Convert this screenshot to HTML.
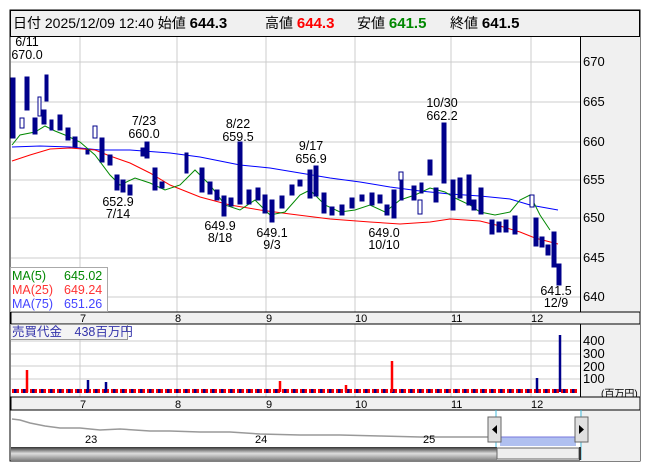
<!DOCTYPE html>
<html><head><meta charset="utf-8"><style>
body{margin:0;background:#fff;width:653px;height:470px;overflow:hidden;font-family:"Liberation Sans","Noto Sans CJK JP",sans-serif}
svg text{font-family:"Liberation Sans","Noto Sans CJK JP",sans-serif}
</style></head><body>
<svg width="653" height="470" xmlns="http://www.w3.org/2000/svg">
<rect x="10" y="10" width="630" height="451" fill="#fff" stroke="#000"/>
<rect x="10.5" y="10.5" width="629" height="26" fill="#f0f0f0" stroke="#000"/>
<text x="13" y="28" font-size="14" fill="#000">日付 2025/12/09 12:40 始値 <tspan font-weight="bold" font-size="15">644.3</tspan></text>
<text x="265" y="28" font-size="14">高値 <tspan font-weight="bold" font-size="15" fill="#f00">644.3</tspan></text>
<text x="357" y="28" font-size="14">安値 <tspan font-weight="bold" font-size="15" fill="#080">641.5</tspan></text>
<text x="450" y="28" font-size="14">終値 <tspan font-weight="bold" font-size="15">641.5</tspan></text>
<rect x="580" y="37" width="60" height="424" fill="#f0f0f0"/>
<line x1="580.5" y1="37" x2="580.5" y2="410" stroke="#000"/>
<g stroke="#ccc">
<line x1="11" x2="580" y1="62" y2="62"/><line x1="11" x2="580" y1="102" y2="102"/><line x1="11" x2="580" y1="142" y2="142"/><line x1="11" x2="580" y1="180" y2="180"/><line x1="11" x2="580" y1="218" y2="218"/><line x1="11" x2="580" y1="258" y2="258"/><line x1="11" x2="580" y1="297" y2="297"/>
<line x1="80" x2="80" y1="37" y2="397"/><line x1="177" x2="177" y1="37" y2="397"/><line x1="266" x2="266" y1="37" y2="397"/><line x1="355" x2="355" y1="37" y2="397"/><line x1="451" x2="451" y1="37" y2="397"/><line x1="531" x2="531" y1="37" y2="397"/>
<line x1="11" x2="580" y1="341" y2="341"/><line x1="11" x2="580" y1="354" y2="354"/><line x1="11" x2="580" y1="366" y2="366"/><line x1="11" x2="580" y1="379" y2="379"/>
</g>
<g font-size="13" fill="#000">
<text x="583" y="66">670</text><text x="583" y="106">665</text><text x="583" y="146">660</text><text x="583" y="184">655</text><text x="583" y="222">650</text><text x="583" y="262">645</text><text x="583" y="301">640</text>
<text x="583" y="345">400</text><text x="583" y="358">300</text><text x="583" y="371">200</text><text x="583" y="383">100</text>
<text x="601" y="397" font-size="10">(百万円)</text>
</g>
<rect x="11" y="312" width="629" height="12" fill="#f0f0f0" stroke="#000"/>
<rect x="11" y="397" width="629" height="13" fill="#f0f0f0" stroke="#000"/>
<g font-size="11"><text x="80" y="322">7</text><text x="175" y="322">8</text><text x="266" y="322">9</text><text x="355" y="322">10</text><text x="451" y="322">11</text><text x="531" y="322">12</text>
<text x="80" y="408">7</text><text x="175" y="408">8</text><text x="266" y="408">9</text><text x="355" y="408">10</text><text x="451" y="408">11</text><text x="531" y="408">12</text></g>
<polyline fill="none" stroke="#00f" points="12,147 40,146 70,147 100,150 130,150 170,153 200,157 240,165 270,168 300,173 330,178 360,182 390,187 420,191 450,194 480,196 510,199 530,205 558,210"/>
<polyline fill="none" stroke="#f00" points="12,161 30,155 50,149 70,148 95,150 110,156 130,163 150,173 170,185 200,197 230,205 260,210 290,214 330,219 370,222 400,224 430,222 450,219 480,221 500,226 520,232 535,238 558,244"/>
<polyline fill="none" stroke="#080" points="12,145 20,135 35,132 45,126 55,131 65,135 80,142 95,155 110,175 120,185 135,178 150,183 165,190 180,185 195,170 210,185 225,205 240,210 255,200 270,215 285,212 300,195 310,190 325,205 340,212 355,210 370,205 385,212 400,200 415,195 430,188 445,192 455,198 470,205 480,212 495,215 510,212 520,200 530,195 540,215 550,230"/>
<g fill="#00008b" stroke="#00008b">
<rect x="11" y="78" width="4" height="60"/><rect x="25" y="77" width="4" height="33"/><rect x="42" y="110" width="4" height="14"/><rect x="45" y="75" width="3" height="26"/>
<rect x="33" y="118" width="4" height="16"/><rect x="50" y="120" width="3" height="10"/><rect x="58" y="115" width="4" height="15"/><rect x="66" y="128" width="4" height="12"/><rect x="73" y="137" width="4" height="10"/>
<rect x="86" y="150" width="3" height="4"/><rect x="100" y="138" width="4" height="24"/><rect x="108" y="155" width="4" height="10"/><rect x="115" y="175" width="4" height="15"/><rect x="121" y="180" width="4" height="12"/>
<rect x="128" y="185" width="4" height="10"/><rect x="145" y="142" width="4" height="16"/><rect x="141" y="148" width="4" height="8"/><rect x="153" y="168" width="4" height="22"/><rect x="160" y="182" width="4" height="6"/>
<rect x="185" y="153" width="3" height="20"/><rect x="200" y="168" width="4" height="24"/><rect x="208" y="182" width="4" height="12"/><rect x="215" y="190" width="4" height="10"/><rect x="222" y="196" width="4" height="20"/>
<rect x="229" y="198" width="4" height="8"/><rect x="238" y="142" width="4" height="62"/><rect x="247" y="190" width="4" height="14"/><rect x="256" y="188" width="4" height="12"/><rect x="263" y="195" width="4" height="18"/>
<rect x="270" y="200" width="4" height="22"/><rect x="280" y="196" width="4" height="12"/><rect x="290" y="185" width="4" height="10"/><rect x="298" y="180" width="4" height="6"/><rect x="308" y="170" width="4" height="28"/>
<rect x="314" y="166" width="4" height="30"/><rect x="322" y="193" width="4" height="20"/><rect x="330" y="207" width="4" height="8"/><rect x="340" y="205" width="4" height="10"/><rect x="350" y="198" width="4" height="10"/>
<rect x="360" y="195" width="4" height="6"/><rect x="370" y="193" width="4" height="12"/><rect x="378" y="195" width="4" height="8"/><rect x="385" y="205" width="4" height="10"/><rect x="392" y="190" width="4" height="28"/>
<rect x="400" y="180" width="3" height="20"/><rect x="412" y="186" width="4" height="14"/><rect x="420" y="183" width="3" height="10"/><rect x="428" y="160" width="4" height="15"/><rect x="434" y="188" width="4" height="14"/>
<rect x="442" y="123" width="4" height="60"/><rect x="451" y="180" width="4" height="30"/><rect x="458" y="178" width="4" height="20"/><rect x="467" y="175" width="4" height="30"/><rect x="472" y="200" width="4" height="10"/>
<rect x="479" y="188" width="4" height="26"/><rect x="490" y="220" width="4" height="14"/><rect x="497" y="222" width="4" height="10"/><rect x="504" y="220" width="4" height="12"/><rect x="513" y="216" width="4" height="18"/>
<rect x="534" y="218" width="4" height="28"/><rect x="540" y="237" width="4" height="10"/><rect x="546" y="245" width="4" height="10"/><rect x="552" y="232" width="4" height="35"/><rect x="557" y="264" width="4" height="21"/>
</g>
<g fill="#fff" stroke="#00008b"><rect x="38" y="97" width="3" height="19"/><rect x="20" y="118" width="4" height="10"/><rect x="93" y="126" width="4" height="12"/><rect x="399" y="172" width="4" height="8"/><rect x="418" y="200" width="4" height="14"/><rect x="530" y="195" width="4" height="12"/></g>
<g font-size="12.5" fill="#000" text-anchor="middle">
<text x="27" y="46">6/11</text><text x="27" y="59">670.0</text>
<text x="144" y="125">7/23</text><text x="144" y="138">660.0</text>
<text x="238" y="128">8/22</text><text x="238" y="141">659.5</text>
<text x="311" y="150">9/17</text><text x="311" y="163">656.9</text>
<text x="442" y="107">10/30</text><text x="442" y="120">662.2</text>
<text x="118" y="206">652.9</text><text x="118" y="218">7/14</text>
<text x="220" y="230">649.9</text><text x="220" y="242">8/18</text>
<text x="272" y="237">649.1</text><text x="272" y="249">9/3</text>
<text x="384" y="237">649.0</text><text x="384" y="249">10/10</text>
<text x="556" y="295">641.5</text><text x="556" y="307">12/9</text>
</g>
<rect x="10.5" y="267.5" width="97" height="44" fill="#fff" stroke="#aaa"/>
<g font-size="12.5"><text x="12" y="280" fill="#080">MA(5)</text><text x="64" y="280" fill="#080">645.02</text>
<text x="12" y="294" fill="#f33">MA(25)</text><text x="64" y="294" fill="#f33">649.24</text>
<text x="12" y="308" fill="#44f">MA(75)</text><text x="64" y="308" fill="#44f">651.26</text></g>
<rect x="10.5" y="324.5" width="117" height="15" fill="#f4f4f4" stroke="#999"/>
<text x="12" y="336" font-size="12.5" fill="#33a">売買代金　438百万円</text>
<g stroke-width="2.5">
<line x1="12" x2="578" y1="391" y2="391" stroke="#f00" stroke-width="4" stroke-dasharray="2.5 2"/>
<line x1="14" x2="578" y1="391" y2="391" stroke="#00008b" stroke-width="4" stroke-dasharray="2.5 6.5"/>
<line x1="27" x2="27" y1="392" y2="370" stroke="#f00"/>
<line x1="88" x2="88" y1="392" y2="380" stroke="#00008b"/>
<line x1="106" x2="106" y1="392" y2="382" stroke="#00008b"/>
<line x1="280" x2="280" y1="392" y2="381" stroke="#f00"/>
<line x1="346" x2="346" y1="392" y2="385" stroke="#f00"/>
<line x1="392" x2="392" y1="392" y2="361" stroke="#f00"/>
<line x1="537" x2="537" y1="392" y2="378" stroke="#00008b"/>
<line x1="560" x2="560" y1="392" y2="335" stroke="#00008b"/>
</g>
<polyline fill="none" stroke="#999" stroke-width="1.5" points="12,419 20,420 30,423 45,426 60,428 80,428 100,430 120,429 150,431 170,431 200,432 230,432 260,434 300,435 340,435 380,436 420,437 460,437 490,437"/>
<rect x="500" y="437" width="76" height="9" fill="#b0c0f0"/>
<line x1="500" x2="576" y1="437" y2="437" stroke="#77d"/>
<g font-size="11"><text x="85" y="443">23</text><text x="255" y="443">24</text><text x="423" y="443">25</text></g>
<line x1="496" y1="410" x2="496" y2="460" stroke="#4bd"/><line x1="581" y1="410" x2="581" y2="460" stroke="#4bd"/>
<rect x="488" y="417" width="13" height="25" fill="#e0e0e0" stroke="#666"/><path d="M497 425 L492 429.5 L497 434Z" fill="#000"/>
<rect x="575" y="417" width="13" height="25" fill="#e0e0e0" stroke="#666"/><path d="M579 425 L584 429.5 L579 434Z" fill="#000"/>
<defs><linearGradient id="g" x1="0" y1="0" x2="0" y2="1"><stop offset="0" stop-color="#333"/><stop offset=".5" stop-color="#ddd"/><stop offset="1" stop-color="#888"/></linearGradient></defs>
<rect x="11" y="447" width="486" height="13" fill="url(#g)"/>
<rect x="497" y="448" width="82" height="11" fill="#eee" stroke="#666"/>
<rect x="579" y="447" width="2" height="13" fill="#333"/>
</svg>
</body></html>
